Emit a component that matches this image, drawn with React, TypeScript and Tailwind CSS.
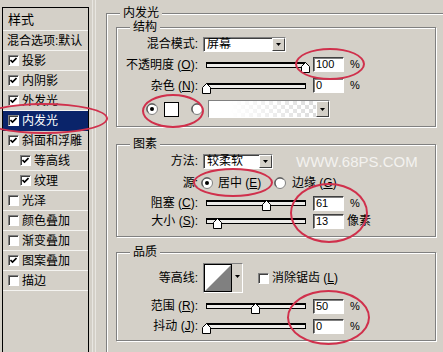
import type { ReactNode } from 'react';

type StyleItem = { label: string; checked: boolean; sub?: boolean; active?: boolean };

const styleItems: StyleItem[] = [
    { label: '投影', checked: true },
    { label: '内阴影', checked: true },
    { label: '外发光', checked: true },
    { label: '内发光', checked: true, active: true },
    { label: '斜面和浮雕', checked: true },
    { label: '等高线', checked: true, sub: true },
    { label: '纹理', checked: true, sub: true },
    { label: '光泽', checked: false },
    { label: '颜色叠加', checked: false },
    { label: '渐变叠加', checked: false },
    { label: '图案叠加', checked: true },
    { label: '描边', checked: false },
];

function CheckBox({ checked }: { checked: boolean }) {
    return (
        <span className="flex h-[11px] w-[11px] shrink-0 items-center justify-center border border-t-[#808080] border-l-[#808080] border-r-white border-b-white bg-white shadow-[inset_1px_1px_0_#404040]">
            {checked && (
                <svg width="7" height="7" viewBox="0 0 7 7">
                    <path d="M0.5 3 L2.5 5 L6.5 1" fill="none" stroke="#000" strokeWidth="1.6" />
                </svg>
            )}
        </span>
    );
}

function Radio({ on }: { on: boolean }) {
    return (
        <svg width="12" height="12" viewBox="0 0 12 12" className="shrink-0">
            <circle cx="6" cy="6" r="5.5" fill="#fff" stroke="#808080" />
            <path d="M2.5 9.5 A4.6 4.6 0 0 1 9.5 2.5" fill="none" stroke="#404040" />
            {on && <circle cx="6" cy="6" r="2" fill="#000" />}
        </svg>
    );
}

function DropButton() {
    return (
        <span className="ml-auto flex h-full w-[13px] shrink-0 items-center justify-center border border-t-white border-l-white border-r-[#404040] border-b-[#404040] bg-[#d4d0c8]">
            <svg width="5" height="3" viewBox="0 0 5 3">
                <path d="M0 0h5L2.5 3z" fill="#000" />
            </svg>
        </span>
    );
}

function Select({ value, className }: { value: string; className: string }) {
    return (
        <div className={`ml-[5px] flex h-[15px] shrink-0 items-center border border-t-[#808080] border-l-[#808080] border-r-white border-b-white bg-white pl-[3px] shadow-[inset_1px_1px_0_#404040] ${className}`}>
            <span>{value}</span>
            <DropButton />
        </div>
    );
}

function Slider({ value }: { value: number }) {
    return (
        <div className="relative ml-[8px] h-[6px] w-[100px] shrink-0 border border-t-2 border-black bg-[#ecebe8]">
            <svg
                className="absolute top-[-2px]"
                style={{ left: Math.round(value * 99) - 5 }}
                width="9"
                height="11"
                viewBox="0 0 9 11"
            >
                <path d="M0.5 4.5 L4.5 0.5 L8.5 4.5 V10.5 H0.5 Z" fill="#fff" stroke="#000" />
            </svg>
        </div>
    );
}

function NumBox({ value }: { value: string }) {
    return (
        <div className="ml-[7px] flex h-[15px] w-[31px] shrink-0 items-center border border-t-[#404040] border-l-[#404040] border-r-white border-b-white bg-white pl-[2px] text-[11px] shadow-[inset_1px_1px_0_#808080]">
            {value}
        </div>
    );
}

function Label({ children }: { children: ReactNode }) {
    return <span className="w-[81px] shrink-0 text-right">{children}</span>;
}

function Group({ title, className, children }: { title: string; className: string; children: ReactNode }) {
    return (
        <div className={`relative shrink-0 border border-[#808080] shadow-[inset_1px_1px_0_#fff,1px_1px_0_#fff] ${className}`}>
            <span className="absolute left-[13px] top-[-8px] bg-[#d4d0c8] px-[3px] leading-[14px]">{title}</span>
            {children}
        </div>
    );
}

export default function App() {
    return (
        <div className="relative flex h-[352px] w-[443px] items-start overflow-hidden bg-[#d4d0c8] text-[12px] leading-none text-black font-['Liberation_Sans','Noto_Sans_CJK_SC',sans-serif]">
            {/* style list */}
            <div className="ml-[2px] mt-[7px] h-[360px] w-[87px] shrink-0 border border-black">
                <div className="flex h-[23px] items-center border-b border-[#f4f3f0] pl-[5px] text-[13px]">样式</div>
                <div className="flex h-[20px] items-center border-b border-[#f4f3f0] pl-[4px]">混合选项:默认</div>
                {styleItems.map((item) => (
                    <div
                        key={item.label}
                        className={`flex h-[20px] items-center gap-[3px] border-b ${item.active ? 'border-[#0a246a] bg-[#0a246a] text-white' : 'border-[#f4f3f0]'} ${item.sub ? 'pl-[17px]' : 'pl-[5px]'}`}
                    >
                        <CheckBox checked={item.checked} />
                        <span>{item.label}</span>
                    </div>
                ))}
            </div>

            <div className="ml-[3px] h-full w-[4px] shrink-0 border-x border-[#e8e6e1]" />

            {/* inner glow panel */}
            <Group title="内发光" className="ml-[10px] mt-[13px] h-[360px] w-[360px]">
                <div className="flex flex-col pl-[9px] pt-[13px]">
                    <Group title="结构" className="h-[100px] w-[320px]">
                        <div className="flex flex-col pt-[6px]">
                            <div className="flex h-[20px] items-center">
                                <Label>混合模式:</Label>
                                <Select value="屏幕" className="w-[83px]" />
                            </div>
                            <div className="flex h-[21px] items-center">
                                <Label>不透明度 (<u>O</u>):</Label>
                                <Slider value={1} />
                                <NumBox value="100" />
                                <span className="ml-[6px] text-[11px]">%</span>
                            </div>
                            <div className="flex h-[21px] items-center">
                                <Label>杂色 (<u>N</u>):</Label>
                                <Slider value={0} />
                                <NumBox value="0" />
                                <span className="ml-[6px] text-[11px]">%</span>
                            </div>
                            <div className="flex h-[26px] items-center pl-[29px]">
                                <Radio on />
                                <span className="ml-[6px] h-[15px] w-[15px] shrink-0 border border-black bg-white" />
                                <span className="ml-[12px]">
                                    <Radio on={false} />
                                </span>
                                <div className="ml-[5px] flex h-[18px] w-[122px] shrink-0 border border-t-[#808080] border-l-[#808080] border-r-white border-b-white bg-white">
                                    <div className="h-full flex-1 bg-[conic-gradient(#dcdcdc_25%,#fff_0_50%,#dcdcdc_0_75%,#fff_0)] bg-[length:8px_8px]">
                                        <div className="h-full bg-linear-to-r from-white from-20% to-transparent" />
                                    </div>
                                    <DropButton />
                                </div>
                            </div>
                        </div>
                    </Group>

                    <Group title="图素" className="mt-[17px] h-[93px] w-[320px]">
                        <div className="flex flex-col pt-[6px]">
                            <div className="flex h-[20px] items-center">
                                <Label>方法:</Label>
                                <Select value="较柔软" className="w-[70px]" />
                                <span className="ml-[23px] text-[15px] text-[#f3f2ef]">WWW.68PS.COM</span>
                            </div>
                            <div className="flex h-[24px] items-center">
                                <Label>源:</Label>
                                <span className="ml-[3px]">
                                    <Radio on />
                                </span>
                                <span className="ml-[5px] w-[56px] shrink-0">居中 (<u>E</u>)</span>
                                <Radio on={false} />
                                <span className="ml-[6px]">边缘 (<u>G</u>)</span>
                            </div>
                            <div className="flex h-[16px] items-center">
                                <Label>阻塞 (<u>C</u>):</Label>
                                <Slider value={0.61} />
                                <NumBox value="61" />
                                <span className="ml-[6px] text-[11px]">%</span>
                            </div>
                            <div className="flex h-[20px] items-center">
                                <Label>大小 (<u>S</u>):</Label>
                                <Slider value={0.11} />
                                <NumBox value="13" />
                                <span className="ml-[3px]">像素</span>
                            </div>
                        </div>
                    </Group>

                    <Group title="品质" className="mt-[15px] h-[89px] w-[320px]">
                        <div className="flex flex-col pt-[10px]">
                            <div className="flex h-[30px] items-center">
                                <Label>等高线:</Label>
                                <div className="ml-[5px] flex h-[30px] w-[40px] shrink-0 border border-t-[#808080] border-l-[#808080] border-r-white border-b-white bg-[#d4d0c8]">
                                    <svg width="28" height="28" viewBox="0 0 28 28" className="shrink-0 border border-black bg-white">
                                        <path d="M0 28 L28 0 L28 28 Z" fill="#808080" />
                                    </svg>
                                    <span className="flex flex-1 justify-center pt-[11px]">
                                        <svg width="5" height="3" viewBox="0 0 5 3">
                                            <path d="M0 0h5L2.5 3z" fill="#000" />
                                        </svg>
                                    </span>
                                </div>
                                <span className="ml-[15px]">
                                    <CheckBox checked={false} />
                                </span>
                                <span className="ml-[3px]">消除锯齿 (<u>L</u>)</span>
                            </div>
                            <div className="mt-[3px] flex h-[20px] items-center">
                                <Label>范围 (<u>R</u>):</Label>
                                <Slider value={0.49} />
                                <NumBox value="50" />
                                <span className="ml-[6px] text-[11px]">%</span>
                            </div>
                            <div className="flex h-[20px] items-center">
                                <Label>抖动 (<u>J</u>):</Label>
                                <Slider value={0} />
                                <NumBox value="0" />
                                <span className="ml-[6px] text-[11px]">%</span>
                            </div>
                        </div>
                    </Group>
                </div>
            </Group>

            {/* red marker ellipses */}
            <span className="pointer-events-none absolute left-[-20px] top-[103px] h-[31px] w-[128px] rounded-[50%] border-2 border-[#d0304c]" />
            <span className="pointer-events-none absolute left-[295px] top-[48px] h-[32px] w-[70px] rounded-[50%] border-2 border-[#d0304c]" />
            <span className="pointer-events-none absolute left-[142px] top-[94px] h-[34px] w-[62px] rounded-[50%] border-2 border-[#d0304c]" />
            <span className="pointer-events-none absolute left-[193px] top-[168px] h-[29px] w-[80px] rounded-[50%] border-2 border-[#d0304c]" />
            <span className="pointer-events-none absolute left-[290px] top-[183px] h-[60px] w-[78px] rounded-[50%] border-2 border-[#d0304c]" />
            <span className="pointer-events-none absolute left-[287px] top-[290px] h-[55px] w-[83px] rounded-[50%] border-2 border-[#d0304c]" />
        </div>
    );
}
